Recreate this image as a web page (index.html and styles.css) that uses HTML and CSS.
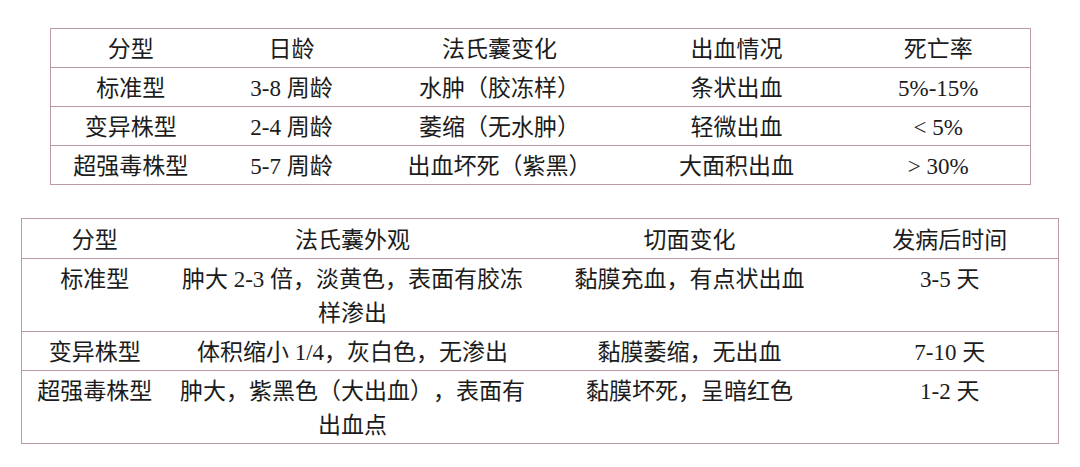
FILE: index.html
```html
<!DOCTYPE html>
<html lang="zh-CN">
<head>
<meta charset="utf-8">
<title>法氏囊病分型</title>
<link rel="stylesheet" href="styles.css">
</head>
<body>
<table class="grid grid-one">
  <colgroup>
    <col class="c160"><col class="c162"><col class="c254"><col class="c220"><col class="c184">
  </colgroup>
  <tr><td>分型</td><td>日龄</td><td>法氏囊变化</td><td>出血情况</td><td>死亡率</td></tr>
  <tr><td>标准型</td><td>3-8 周龄</td><td>水肿（胶冻样）</td><td>条状出血</td><td>5%-15%</td></tr>
  <tr><td>变异株型</td><td>2-4 周龄</td><td>萎缩（无水肿）</td><td>轻微出血</td><td>&lt; 5%</td></tr>
  <tr><td>超强毒株型</td><td>5-7 周龄</td><td>出血坏死（紫黑）</td><td>大面积出血</td><td>&gt; 30%</td></tr>
</table>

<table class="grid grid-two">
  <colgroup>
    <col class="c146"><col class="c370"><col class="c304"><col class="c217">
  </colgroup>
  <tr class="head"><td>分型</td><td>法氏囊外观</td><td>切面变化</td><td>发病后时间</td></tr>
  <tr><td>标准型</td><td class="wrap">肿大 2-3 倍，淡黄色，表面有胶冻样渗出</td><td>黏膜充血，有点状出血</td><td>3-5 天</td></tr>
  <tr><td>变异株型</td><td class="wrap">体积缩小 1/4，灰白色，无渗出</td><td>黏膜萎缩，无出血</td><td>7-10 天</td></tr>
  <tr><td>超强毒株型</td><td class="wrap">肿大，紫黑色（大出血），表面有出血点</td><td>黏膜坏死，呈暗红色</td><td>1-2 天</td></tr>
</table>
</body>
</html>
```

FILE: styles.css
```css
html, body {
  margin: 0;
  padding: 0;
  background: #ffffff;
}

body {
  font-family: "Liberation Serif", "Noto Sans CJK SC", serif;
  font-size: 23px;
  color: #1c1c1c;
  text-spacing-trim: space-all;
}

.grid {
  border-collapse: collapse;
  table-layout: fixed;
  border: 1px solid #bb9aa3;
}

.grid td {
  border-bottom: 1px solid #bb9aa3;
  padding: 4px 0 0 0;
  line-height: 34px;
  text-align: center;
  vertical-align: top;
  white-space: nowrap;
}

.grid-one {
  margin: 28px 0 0 50px;
  width: 980px;
}

.grid-two {
  margin: 33px 0 0 21px;
  width: 1037px;
}

.grid-two .head td {
  padding-top: 5px;
}

.grid-two td.wrap {
  white-space: normal;
  padding-left: 10px;
  padding-right: 10px;
}

.c160 { width: 160px; }
.c162 { width: 162px; }
.c254 { width: 254px; }
.c220 { width: 220px; }
.c184 { width: 184px; }
.c146 { width: 146px; }
.c370 { width: 370px; }
.c304 { width: 304px; }
.c217 { width: 217px; }
```
